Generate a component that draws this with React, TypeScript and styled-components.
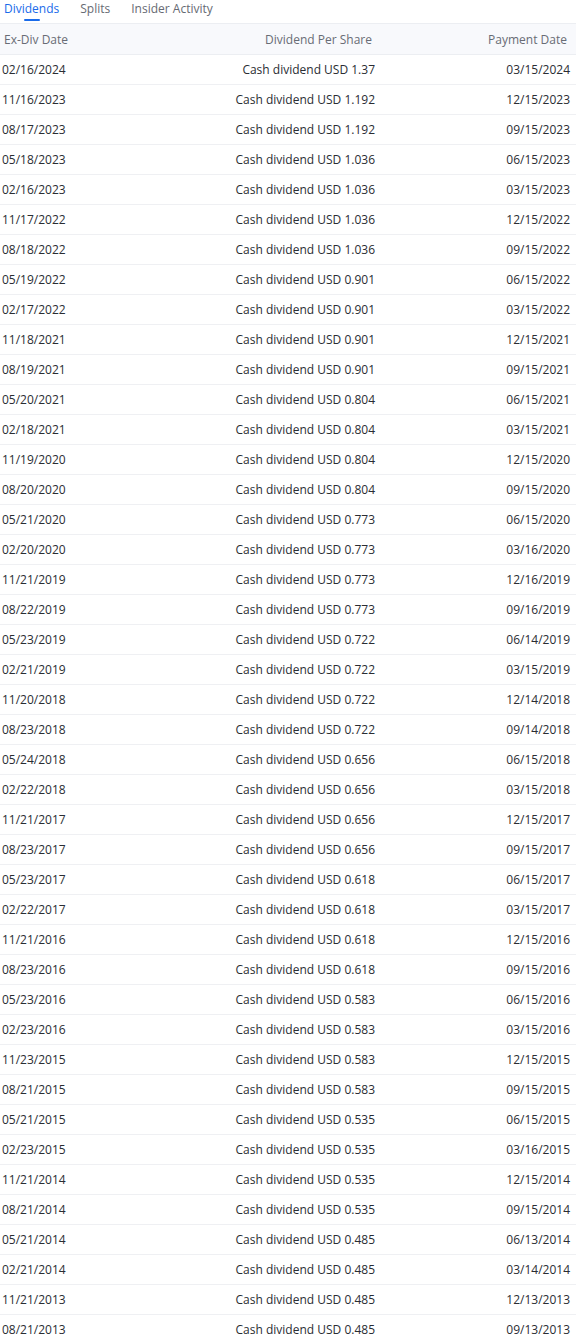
import React from 'react';
import styled, { createGlobalStyle } from 'styled-components';

interface IDividend {
    exDate: string;
    amount: string;
    payDate: string;
}

const rows: IDividend[] = [
    { exDate: '02/16/2024', amount: '1.37', payDate: '03/15/2024' },
    { exDate: '11/16/2023', amount: '1.192', payDate: '12/15/2023' },
    { exDate: '08/17/2023', amount: '1.192', payDate: '09/15/2023' },
    { exDate: '05/18/2023', amount: '1.036', payDate: '06/15/2023' },
    { exDate: '02/16/2023', amount: '1.036', payDate: '03/15/2023' },
    { exDate: '11/17/2022', amount: '1.036', payDate: '12/15/2022' },
    { exDate: '08/18/2022', amount: '1.036', payDate: '09/15/2022' },
    { exDate: '05/19/2022', amount: '0.901', payDate: '06/15/2022' },
    { exDate: '02/17/2022', amount: '0.901', payDate: '03/15/2022' },
    { exDate: '11/18/2021', amount: '0.901', payDate: '12/15/2021' },
    { exDate: '08/19/2021', amount: '0.901', payDate: '09/15/2021' },
    { exDate: '05/20/2021', amount: '0.804', payDate: '06/15/2021' },
    { exDate: '02/18/2021', amount: '0.804', payDate: '03/15/2021' },
    { exDate: '11/19/2020', amount: '0.804', payDate: '12/15/2020' },
    { exDate: '08/20/2020', amount: '0.804', payDate: '09/15/2020' },
    { exDate: '05/21/2020', amount: '0.773', payDate: '06/15/2020' },
    { exDate: '02/20/2020', amount: '0.773', payDate: '03/16/2020' },
    { exDate: '11/21/2019', amount: '0.773', payDate: '12/16/2019' },
    { exDate: '08/22/2019', amount: '0.773', payDate: '09/16/2019' },
    { exDate: '05/23/2019', amount: '0.722', payDate: '06/14/2019' },
    { exDate: '02/21/2019', amount: '0.722', payDate: '03/15/2019' },
    { exDate: '11/20/2018', amount: '0.722', payDate: '12/14/2018' },
    { exDate: '08/23/2018', amount: '0.722', payDate: '09/14/2018' },
    { exDate: '05/24/2018', amount: '0.656', payDate: '06/15/2018' },
    { exDate: '02/22/2018', amount: '0.656', payDate: '03/15/2018' },
    { exDate: '11/21/2017', amount: '0.656', payDate: '12/15/2017' },
    { exDate: '08/23/2017', amount: '0.656', payDate: '09/15/2017' },
    { exDate: '05/23/2017', amount: '0.618', payDate: '06/15/2017' },
    { exDate: '02/22/2017', amount: '0.618', payDate: '03/15/2017' },
    { exDate: '11/21/2016', amount: '0.618', payDate: '12/15/2016' },
    { exDate: '08/23/2016', amount: '0.618', payDate: '09/15/2016' },
    { exDate: '05/23/2016', amount: '0.583', payDate: '06/15/2016' },
    { exDate: '02/23/2016', amount: '0.583', payDate: '03/15/2016' },
    { exDate: '11/23/2015', amount: '0.583', payDate: '12/15/2015' },
    { exDate: '08/21/2015', amount: '0.583', payDate: '09/15/2015' },
    { exDate: '05/21/2015', amount: '0.535', payDate: '06/15/2015' },
    { exDate: '02/23/2015', amount: '0.535', payDate: '03/16/2015' },
    { exDate: '11/21/2014', amount: '0.535', payDate: '12/15/2014' },
    { exDate: '08/21/2014', amount: '0.535', payDate: '09/15/2014' },
    { exDate: '05/21/2014', amount: '0.485', payDate: '06/13/2014' },
    { exDate: '02/21/2014', amount: '0.485', payDate: '03/14/2014' },
    { exDate: '11/21/2013', amount: '0.485', payDate: '12/13/2013' },
    { exDate: '08/21/2013', amount: '0.485', payDate: '09/13/2013' },
];

const tabs = ['Dividends', 'Splits', 'Insider Activity'];

const App: React.FC = () => {
    const [active, setActive] = React.useState<number>(0);

    return (
        <>
            <GlobalStyle />
            <Page>
                <Tabs>
                    {tabs.map((t, i) => (
                        <Tab key={t} $active={i === active} onClick={() => setActive(i)}>
                            {t}
                        </Tab>
                    ))}
                </Tabs>
                <Table>
                    <colgroup>
                        <col />
                        <col />
                        <col style={{ width: '195px' }} />
                    </colgroup>
                    <thead>
                        <tr>
                            <Th $align="left">Ex-Div Date</Th>
                            <Th $align="right">Dividend Per Share</Th>
                            <Th $align="right">Payment Date</Th>
                        </tr>
                    </thead>
                    <tbody>
                        {rows.map(r => (
                            <Tr key={r.exDate}>
                                <Td $align="left">{r.exDate}</Td>
                                <Td $align="right">Cash dividend USD {r.amount}</Td>
                                <Td $align="right">{r.payDate}</Td>
                            </Tr>
                        ))}
                    </tbody>
                </Table>
            </Page>
        </>
    );
};

const GlobalStyle = createGlobalStyle`
    body {
        margin: 0;
        background: #fff;
        font-family: "Open Sans", "Noto Sans", sans-serif;
    }
`

const Page = styled.div`
    width: 576px;
    overflow: hidden;
`

const Tabs = styled.div`
    display: flex;
    gap: 21px;
    height: 23px;
    padding-left: 4px;
`

const Tab = styled.div<{ $active: boolean }>`
    position: relative;
    font-size: 12px;
    line-height: 18px;
    color: ${props => (props.$active ? '#1a6bea' : '#666a73')};
    cursor: pointer;

    &::after {
        content: '';
        display: ${props => (props.$active ? 'block' : 'none')};
        position: absolute;
        left: 50%;
        bottom: 2px;
        width: 16px;
        height: 2px;
        margin-left: -8px;
        background: #1a6bea;
        border-radius: 1px;
    }
`

const Table = styled.table`
    width: 100%;
    table-layout: auto;
    border-collapse: collapse;
    font-size: 12px;
`

const Th = styled.th<{ $align: string }>`
    height: 30px;
    padding: 0 9px 0 4px;
    text-align: ${props => props.$align};
    font-weight: 400;
    color: #686c75;
    background: #f8f9fc;
    border-top: 1px solid #eceef2;
    border-bottom: 1px solid #eceef2;
`

const Tr = styled.tr`
    border-bottom: 1px solid #eff0f3;
`

const Td = styled.td<{ $align: string }>`
    height: 29px;
    padding: 0 6px 0 2px;
    text-align: ${props => props.$align};
    color: #2a2d33;
    white-space: nowrap;
`

export default App;
